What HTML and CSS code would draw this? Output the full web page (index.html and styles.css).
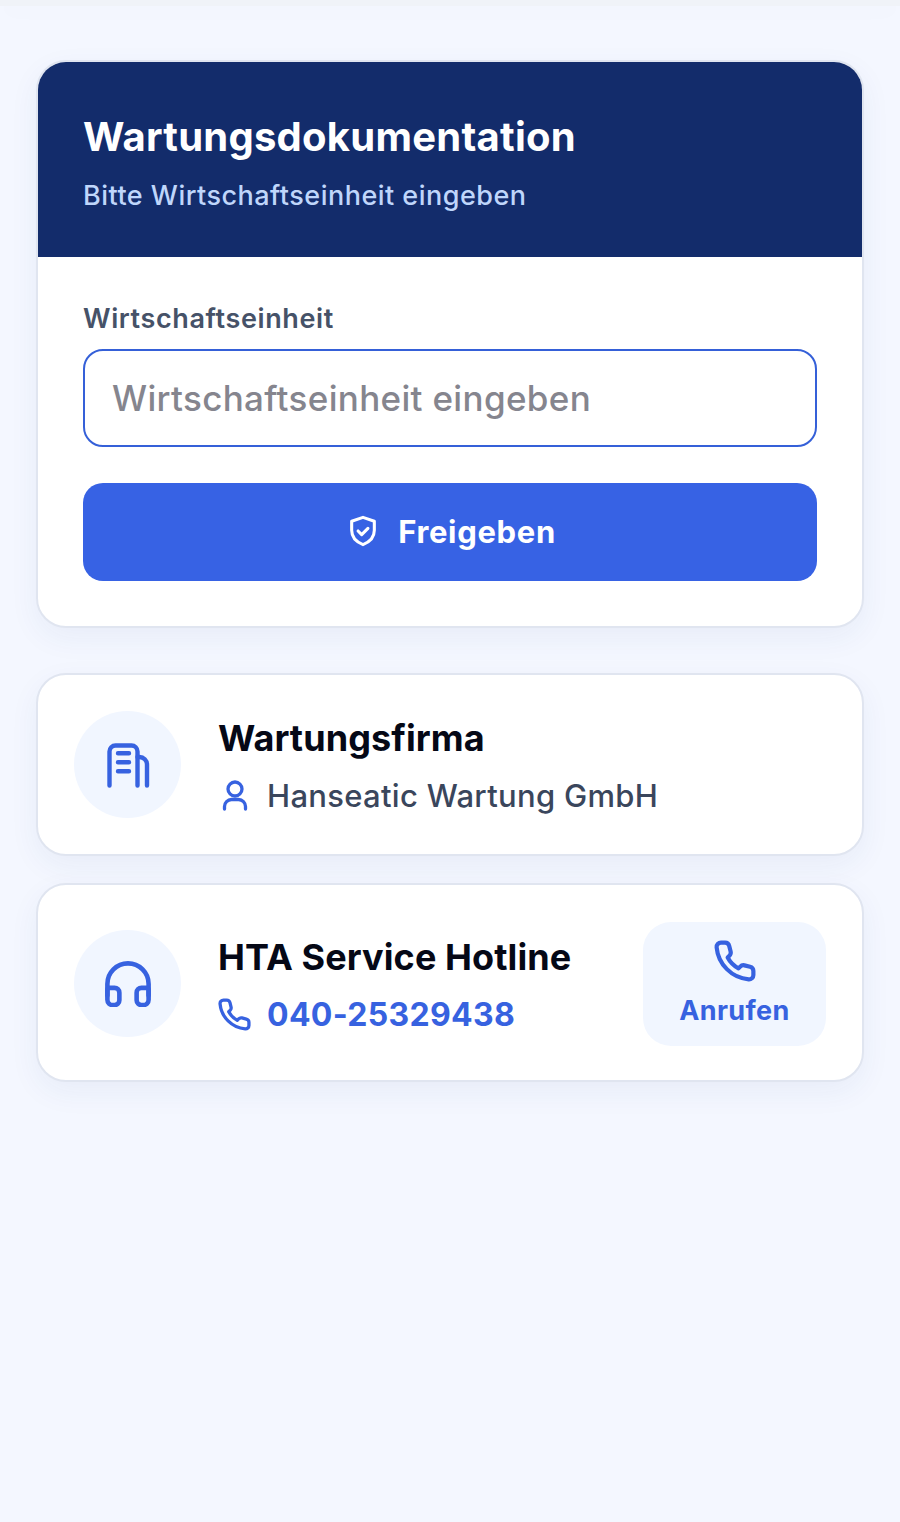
FILE: index.html
```html
<!DOCTYPE html>
<html lang="de">
<head>
<meta charset="utf-8">
<title>Wartungsdokumentation</title>
<link rel="stylesheet" href="styles.css">
</head>
<body>
<div class="topbar"></div>
<main class="page">
  <section class="card main-card">
    <header class="hero">
      <h1>Wartungsdokumentation</h1>
      <p>Bitte Wirtschaftseinheit eingeben</p>
    </header>
    <form class="form">
      <label class="label" for="we">Wirtschaftseinheit</label>
      <input class="input" id="we" type="text" placeholder="Wirtschaftseinheit eingeben">
      <button class="submit" type="button">
        <svg class="submit-icon" viewBox="0 0 24 24" fill="none" stroke="currentColor" stroke-width="2.300" stroke-linecap="round" stroke-linejoin="round"><path d="M12 1.800 20.500 4.700v6.800c0 5-3.500 8.800-8.500 10.700-5-1.900-8.500-5.700-8.500-10.700V4.700z"/><path d="m8.300 12 2.700 2.700 4.700-4.700"/></svg>
        <span>Freigeben</span>
      </button>
    </form>
  </section>

  <section class="card info-card firm">
    <div class="circle">
      <svg class="circle-icon" viewBox="0 0 46 46" fill="none" stroke="currentColor" stroke-width="4.400" stroke-linecap="round" stroke-linejoin="round"><path d="M4.500 43.500V9.500a6 6 0 0 1 6-6h16a6 6 0 0 1 6 6v34"/><path d="M32.500 15h2a7.500 7.500 0 0 1 7.500 7.500v21"/><path d="M13 11.200h11M13 20.200h11M13 29.200h11"/></svg>
    </div>
    <div class="info">
      <h2>Wartungsfirma</h2>
      <div class="line">
        <svg class="line-icon" viewBox="0 0 33 33" fill="none" stroke="currentColor" stroke-width="3.300" stroke-linecap="round" stroke-linejoin="round"><circle cx="17" cy="10" r="7"/><path d="M6.500 30v-2.500a7 7 0 0 1 7-7h7a7 7 0 0 1 7 7V30"/></svg>
        <span class="company">Hanseatic Wartung GmbH</span>
      </div>
    </div>
  </section>

  <section class="card info-card hotline">
    <div class="circle">
      <svg class="circle-icon" viewBox="0 0 48 48" fill="none" stroke="currentColor" stroke-width="4.800" stroke-linecap="round" stroke-linejoin="round"><path d="M2.500 36V24a21.500 21.500 0 0 1 43 0v12"/><path d="M2.500 30a2 2 0 0 1 2-2H10a5 5 0 0 1 5 5v8a5 5 0 0 1-5 5H8a5.500 5.500 0 0 1-5.500-5.500z"/><path d="M45.500 30a2 2 0 0 0-2-2H38a5 5 0 0 0-5 5v8a5 5 0 0 0 5 5h2a5.500 5.500 0 0 0 5.500-5.500z"/></svg>
    </div>
    <div class="info">
      <h2>HTA Service Hotline</h2>
      <div class="line">
        <svg class="line-icon" viewBox="0 0 24 24" fill="none" stroke="currentColor" stroke-width="2.400" stroke-linecap="round" stroke-linejoin="round"><path d="M6.200 1.500H4a2.500 2.500 0 0 0-2.500 2.700C2.400 13.900 10.100 21.600 19.800 22.500a2.500 2.500 0 0 0 2.700-2.500v-2.300a2.500 2.500 0 0 0-1.900-2.400l-3.200-.8a2.500 2.500 0 0 0-2.400.7l-1 1a15 15 0 0 1-6.200-6.200l1-1a2.500 2.500 0 0 0 .7-2.400l-.8-3.200A2.500 2.500 0 0 0 6.200 1.500z"/></svg>
        <span class="tel">040-25329438</span>
      </div>
    </div>
    <a class="call" href="#">
      <svg class="call-icon" viewBox="0 0 24 24" fill="none" stroke="currentColor" stroke-width="2.400" stroke-linecap="round" stroke-linejoin="round"><path d="M6.200 1.500H4a2.500 2.500 0 0 0-2.500 2.700C2.400 13.900 10.100 21.600 19.800 22.500a2.500 2.500 0 0 0 2.700-2.500v-2.300a2.500 2.500 0 0 0-1.900-2.400l-3.200-.8a2.500 2.500 0 0 0-2.400.7l-1 1a15 15 0 0 1-6.200-6.200l1-1a2.500 2.500 0 0 0 .7-2.400l-.8-3.200A2.500 2.500 0 0 0 6.200 1.500z"/></svg>
      <span>Anrufen</span>
    </a>
  </section>
</main>
</body>
</html>
```
FILE: styles.css
```css
* { box-sizing: border-box; }
html, body { margin: 0; height: 100%; }
body {
  background: #f4f7ff;
  font-family: "Inter", "Liberation Sans", sans-serif;
  color: #0b1020;
  overflow: hidden;
}
.topbar {
  height: 6px;
  background: #f0f3f8;
  box-shadow: 0 4px 24px rgba(40, 50, 70, 0.03);
}
.page {
  padding: 54px 36px 0;
  display: flex;
  flex-direction: column;
}
.card {
  background: #fff;
  border: 2px solid #e0e5f0;
  border-radius: 30px;
  box-shadow: 0 10px 30px rgba(30, 60, 140, 0.06);
}
.main-card {
  overflow: hidden;
  height: 568px;
  margin-bottom: 45px;
}
.hero {
  background: #132c6b;
  height: 195px;
  padding: 52px 45px 0;
}
.hero h1 {
  margin: 0;
  font-size: 40px;
  line-height: 46px;
  font-weight: 700;
  letter-spacing: 0.25px;
  color: #fff;
}
.hero p {
  margin: 19px 0 0;
  font-size: 27px;
  line-height: 34px;
  font-weight: 500;
  letter-spacing: 0.48px;
  color: #bfd6fb;
}
.form {
  padding: 45px 45px 0;
  display: flex;
  flex-direction: column;
}
.label {
  font-size: 27px;
  line-height: 33px;
  font-weight: 600;
  letter-spacing: 0.6px;
  color: #465268;
  margin-bottom: 14px;
}
.input {
  height: 98px;
  border: 2px solid #3560d8;
  border-radius: 20px;
  padding: 0 27px;
  font: 500 35px "Inter", "Liberation Sans", sans-serif;
  letter-spacing: 0.33px;
  color: #0b1020;
  background: #fff;
  outline: none;
}
.input::placeholder { color: #85858e; opacity: 1; }
.submit {
  margin-top: 36px;
  height: 98px;
  border: 0;
  border-radius: 20px;
  padding: 0 0 2px 3px;
  background: #3762e4;
  color: #fff;
  display: flex;
  align-items: center;
  justify-content: center;
  gap: 19px;
  font: 700 31px "Inter", "Liberation Sans", sans-serif;
  letter-spacing: 0.67px;
}
.submit-icon { width: 32px; height: 32px; }
.info-card {
  display: flex;
  align-items: center;
  padding: 0 36px;
}
.firm { height: 183px; margin-bottom: 27px; }
.hotline { height: 199px; padding-top: 2px; }
.circle {
  width: 107px;
  height: 107px;
  border-radius: 50%;
  background: #f1f6ff;
  color: #3762e0;
  display: flex;
  align-items: center;
  justify-content: center;
  flex: none;
  margin-right: 37px;
}
.circle-icon { width: 46px; height: 46px; }
.info { flex: 1; min-width: 0; padding-top: 4px; }
.info h2 {
  margin: 0;
  font-size: 36px;
  line-height: 42px;
  font-weight: 700;
  letter-spacing: 0.1px;
  color: #050816;
}
.line {
  margin-top: 16px;
  display: flex;
  align-items: center;
  gap: 16px;
  height: 42px;
}
.line-icon { width: 33px; height: 33px; color: #3762e0; flex: none; }
.company { font-size: 31px; font-weight: 500; letter-spacing: 0.3px; color: #3a465c; }
.tel { font-size: 32px; font-weight: 700; color: #3762e0; letter-spacing: 0.3px; }
.call {
  width: 183px;
  height: 124px;
  border-radius: 28px;
  background: #f1f6ff;
  color: #3762e0;
  text-decoration: none;
  display: flex;
  flex-direction: column;
  align-items: center;
  justify-content: center;
  gap: 12px;
  font-size: 27px;
  font-weight: 700;
  letter-spacing: 0.4px;
  flex: none;
}
.call-icon { width: 42px; height: 42px; }
```
